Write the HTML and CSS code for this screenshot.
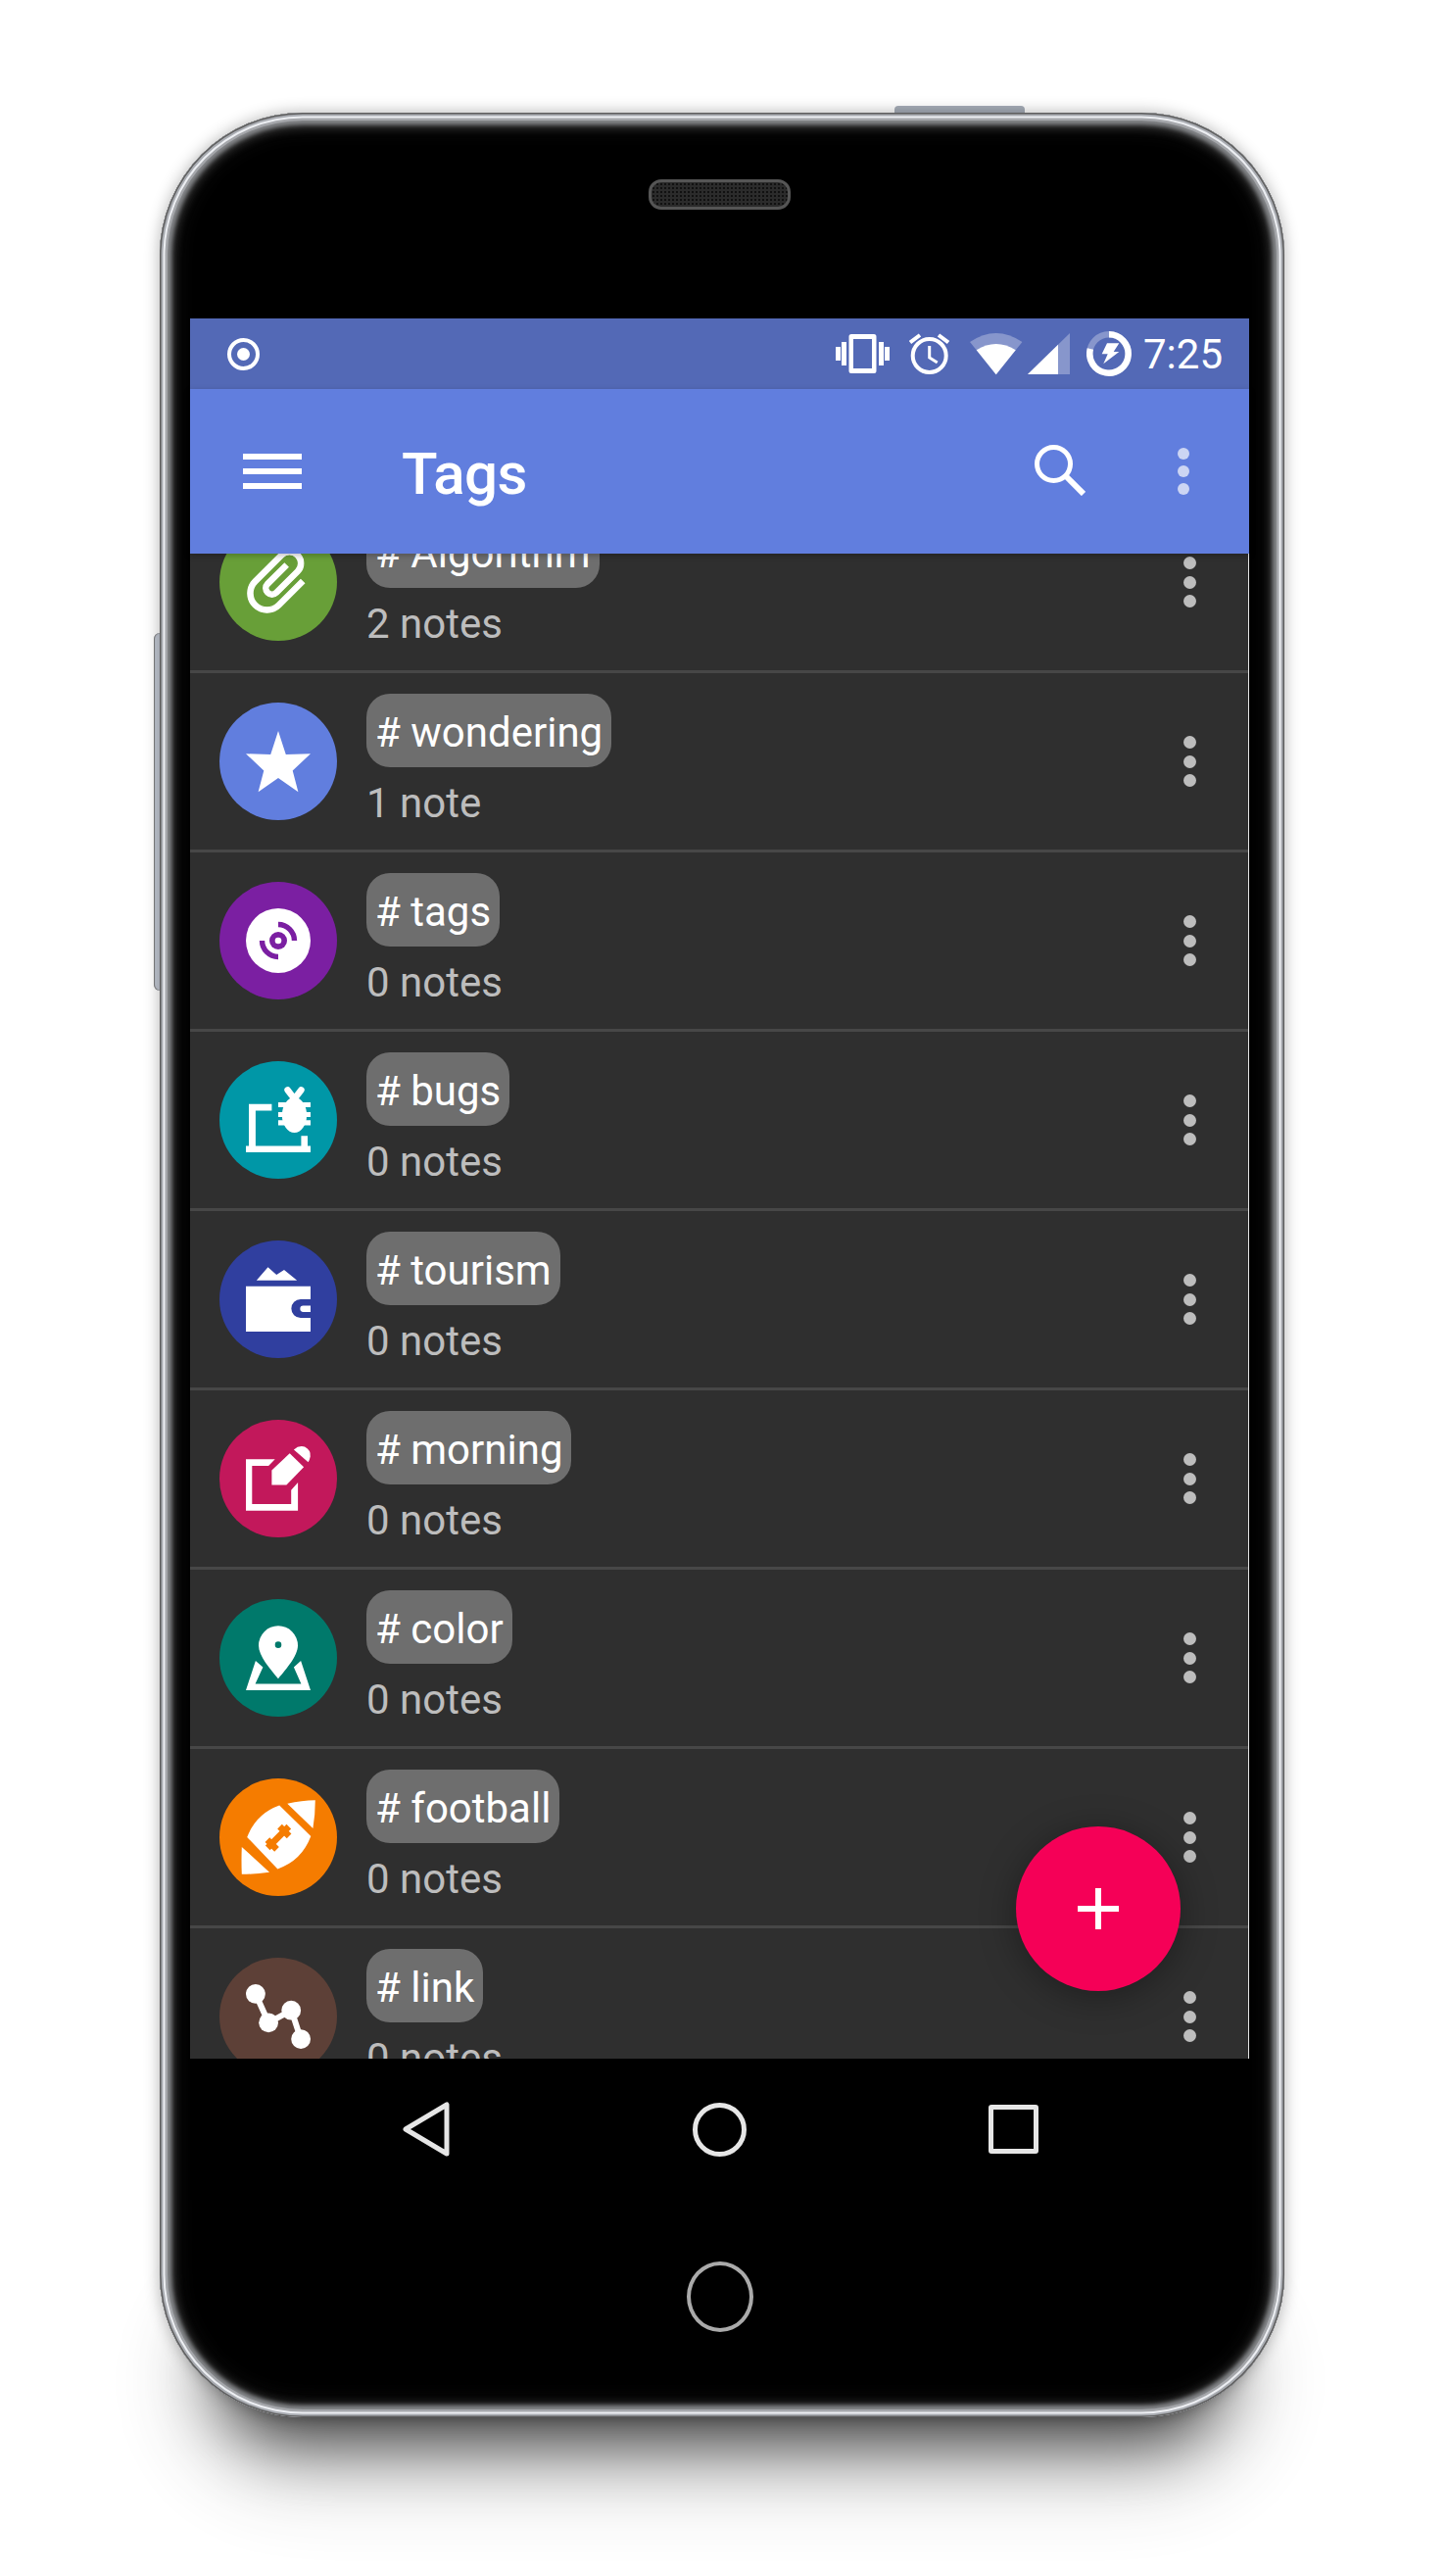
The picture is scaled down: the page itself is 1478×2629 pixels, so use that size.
FILE: index.html
```html
<!DOCTYPE html>
<html lang="en">
<head>
  <meta charset="UTF-8">
  <title>Tags</title>
  <link rel="stylesheet" href="styles.css">
</head>
<body>
  <div class="floor-shadow"></div>
  <div class="side-key"></div>
  <div class="top-key"></div>

  <div class="phone">
    <div class="earpiece"></div>

    <div class="screen">
      <div class="statusbar">
        <svg class="st-record" width="33" height="33" viewBox="0 0 33 33"><circle cx="16.5" cy="16.5" r="14.5" fill="none" stroke="#fff" stroke-width="4"/><circle cx="16.5" cy="16.5" r="6.5" fill="#fff"/></svg>
        <svg width="55" height="40" viewBox="0 0 55 40" fill="#fff"><path fill-rule="evenodd" d="M16 0h23a2.500 2.500 0 0 1 2.500 2.500v35a2.500 2.500 0 0 1-2.500 2.500h-23a2.500 2.500 0 0 1-2.500-2.500v-35a2.500 2.500 0 0 1 2.500-2.500zm2 5v30h19v-30z"/><rect x="44" y="8" width="5" height="24"/><rect x="50" y="13" width="5" height="14"/><rect x="6" y="8" width="5" height="24"/><rect x="0" y="13" width="5" height="14"/></svg>
        <svg class="st-alarm" width="41" height="43" viewBox="0 0 41 43"><circle cx="20.700" cy="23" r="17" fill="none" stroke="#fff" stroke-width="4"/><path d="M20.700 13v12l8 5" fill="none" stroke="#fff" stroke-width="3"/><path d="M1 9.500l10-7.500M40 9.500l-10-7.500" stroke="#fff" stroke-width="4"/></svg>
        <svg class="st-wifi" width="54" height="43" viewBox="0 0 54 43" fill="#fff"><path opacity=".3" d="M26.700 42.300L0 9Q26.700-9 53.400 9z"/><path d="M26.700 42.300L6.700 17.300Q26.700 4.700 46.700 17.300z"/></svg>
        <svg class="st-signal" width="43" height="42" viewBox="0 0 43 42" fill="#fff"><path opacity=".3" d="M0 42L43 0v42z"/><path d="M0 42L31 11.700V42z"/></svg>
        <svg class="st-battery" width="46" height="46" viewBox="0 0 46 46"><circle cx="23" cy="23" r="19.700" fill="none" stroke="#fff" stroke-width="6.500" opacity=".3"/><path d="M23 3.300A19.700 19.700 0 1 1 3.900 18" fill="none" stroke="#fff" stroke-width="6.500"/><path fill="#fff" d="M21 12.300h12.300L27.700 21h5.600L17.300 33.300l4.400-10h-6z"/></svg>
        <span class="time">7:25</span>
      </div>

      <div class="appbar">
        <div class="hamburger"><span></span><span></span><span></span></div>
        <div class="title">Tags</div>
        <svg class="search" width="52" height="52" viewBox="0 0 52 52"><circle cx="19.500" cy="19.500" r="17" fill="none" stroke="#fff" stroke-width="5"/><path d="M32 32l18 18" stroke="#fff" stroke-width="6"/></svg>
        <div class="dots dots-bar"><span></span><span></span><span></span></div>
      </div>

      <div class="list">
        <div class="rows">

          <div class="row">
            <div class="badge c-green">
              <svg class="over" width="72" height="72" viewBox="0 0 24 24"><path transform="translate(12 12) rotate(-45) scale(1.2) translate(-12 -12.500)" fill="#fff" stroke="#fff" stroke-width=".3" d="M7.500,18A5.500,5.500 0 0,1 2,12.500A5.500,5.500 0 0,1 7.500,7H18A4,4 0 0,1 22,11A4,4 0 0,1 18,15H9.500A2.500,2.500 0 0,1 7,12.500A2.500,2.500 0 0,1 9.500,10H17V11.500H9.500A1,1 0 0,0 8.500,12.500A1,1 0 0,0 9.500,13.500H18A2.500,2.500 0 0,0 20.500,11A2.500,2.500 0 0,0 18,8.500H7.500A4,4 0 0,0 3.500,12.500A4,4 0 0,0 7.500,16.500H17V18H7.500Z"/></svg>
            </div>
            <div class="info"><div class="tag"># Algorithm</div><div class="count">2 notes</div></div>
            <div class="dots"><span></span><span></span><span></span></div>
          </div>

          <div class="row">
            <div class="badge c-blue">
              <svg width="72" height="72" viewBox="0 0 24 24"><path fill="#fff" d="M12 17.700L18.800 22.400 16.900 15.200 23 9.400 14.600 9.700 12 1.700 9.400 9.700 1 9.400 7.100 15.200 5.200 22.400z"/></svg>
            </div>
            <div class="info"><div class="tag"># wondering</div><div class="count">1 note</div></div>
            <div class="dots"><span></span><span></span><span></span></div>
          </div>

          <div class="row">
            <div class="badge c-purple">
              <svg width="72" height="72" viewBox="0 0 24 24"><circle cx="12" cy="12" r="11" fill="#fff"/><circle cx="12" cy="12" r="3" fill="#7b1fa2"/><circle cx="12" cy="12" r="1.100" fill="#fff"/><path d="M12 6.500A5.500 5.500 0 0 1 17.500 12M12 17.500A5.500 5.500 0 0 1 6.500 12" fill="none" stroke="#7b1fa2" stroke-width="1.800"/></svg>
            </div>
            <div class="info"><div class="tag"># tags</div><div class="count">0 notes</div></div>
            <div class="dots"><span></span><span></span><span></span></div>
          </div>

          <div class="row">
            <div class="badge c-teal">
              <svg width="72" height="72" viewBox="0 0 24 24" fill="#fff"><path d="M1 20.800h1V6.600h7.800v2.200H4.300v12h15.500v-3.400H22v3.400h1V23H1z"/><ellipse cx="17.500" cy="10.300" rx="4.200" ry="6"/><path d="M12 6h11v1.700H12zM12 9.300h11V11H12zM12 12.100h11v1.700H12z"/><path d="M15.200 1.800l2.300 3 2.300-3" fill="none" stroke="#fff" stroke-width="2.200" stroke-linecap="round"/></svg>
            </div>
            <div class="info"><div class="tag"># bugs</div><div class="count">0 notes</div></div>
            <div class="dots"><span></span><span></span><span></span></div>
          </div>

          <div class="row">
            <div class="badge c-indigo">
              <svg width="72" height="72" viewBox="0 0 24 24" fill="#fff"><path d="M4.600 5.600L8.500 1.100l2.900 2.600L14 2l4.400 3.600z"/><path fill-rule="evenodd" d="M1 7.600h22V12h-3.400a3.150 3.150 0 0 0 0 6.300H23V23H1z"/><path d="M20.500 14.200H23v2.100h-2.500a1.050 1.050 0 0 1 0-2.100z"/></svg>
            </div>
            <div class="info"><div class="tag"># tourism</div><div class="count">0 notes</div></div>
            <div class="dots"><span></span><span></span><span></span></div>
          </div>

          <div class="row">
            <div class="badge c-pink">
              <svg width="72" height="72" viewBox="0 0 24 24" fill="#fff"><path d="M1 5.440h9.900L8.700 7.700H3.100v13h13.300v-4.800l2.300-2.600V22.900H1z"/><path d="M9.800 9.200l6.100-5.800 4.800 4.700-5.900 6.100h-5z"/><path d="M17.300 2.200Q19 .6 21 1.200q2.200 1.200 1.900 3.300-.2 1.100-.7 1.900z"/></svg>
            </div>
            <div class="info"><div class="tag"># morning</div><div class="count">0 notes</div></div>
            <div class="dots"><span></span><span></span><span></span></div>
          </div>

          <div class="row">
            <div class="badge c-green2">
              <svg width="72" height="72" viewBox="0 0 24 24" fill="#fff"><path fill-rule="evenodd" d="M12 1.100a6.670 6.670 0 0 1 6.670 6.670c0 3.600-4 8.100-6.670 11.300-2.700-3.200-6.670-7.700-6.670-11.300A6.670 6.670 0 0 1 12 1.100zm0 5.350a1.100 1.100 0 1 0 0 2.200 1.100 1.100 0 0 0 0-2.200z"/><path d="M4.300 13l2.500 2.200-2.600 5.600h15.600l-2.500-5.600 2.400-2.200L23 23H1z"/></svg>
            </div>
            <div class="info"><div class="tag"># color</div><div class="count">0 notes</div></div>
            <div class="dots"><span></span><span></span><span></span></div>
          </div>

          <div class="row">
            <div class="badge c-orange">
              <svg class="over" width="72" height="72" viewBox="0 0 24 24"><path fill="#fff" d="M15.100.6Q20 -.6 24.600-.6 24.600 4.500 23.800 9zM-.4 15.300L9 23.900Q4 24.600-.4 24.600-.6 20-.4 15.300zM12.400 1.200L23.100 11.700Q20 20 11.800 22.800L1.400 12Q4.500 4 12.400 1.200z"/><path d="M8.400 15.600l7.200-7.200M8.300 12.900l3.200 3.200M12.500 8.400l3.200 3.200" fill="none" stroke="#f57c00" stroke-width="2.200"/></svg>
            </div>
            <div class="info"><div class="tag"># football</div><div class="count">0 notes</div></div>
            <div class="dots"><span></span><span></span><span></span></div>
          </div>

          <div class="row">
            <div class="badge c-brown">
              <svg width="72" height="72" viewBox="0 0 24 24" fill="#fff"><path d="M4.300 4.300l4.400 9.800 7.800-4.200 3.200 9.800" fill="none" stroke="#fff" stroke-width="2"/><circle cx="4.300" cy="4.300" r="3.300"/><circle cx="8.700" cy="14.100" r="3.300"/><circle cx="16.400" cy="9.900" r="3.300"/><circle cx="19.700" cy="19.700" r="3.300"/></svg>
            </div>
            <div class="info"><div class="tag"># link</div><div class="count">0 notes</div></div>
            <div class="dots"><span></span><span></span><span></span></div>
          </div>

        </div>
        <div class="fab"><span class="plus-h"></span><span class="plus-v"></span></div>
      </div>

      <div class="navbar">
        <div class="nav-cell"><svg width="48" height="56" viewBox="0 0 48 56"><path d="M45 3v50L3 28z" fill="none" stroke="#e6e6e6" stroke-width="5" stroke-linejoin="round"/></svg></div>
        <div class="nav-cell"><div class="nav-circle"></div></div>
        <div class="nav-cell"><div class="nav-square"></div></div>
      </div>
    </div>

    <div class="home-key"></div>
  </div>
</body>
</html>
```

FILE: styles.css
```css
html, body {
  margin: 0;
  height: 2629px;
  overflow: hidden;
  background: #fff;
  font-family: Roboto, sans-serif;
}

/* phone body */
.phone {
  position: relative;
  box-sizing: border-box;
  width: 1148px;
  height: 2352px;
  margin: 115px 0 0 163px;
  padding: 68px 36px 0 31px;
  display: flex;
  flex-direction: column;
  align-items: center;
  background: #000;
  border-radius: 146px;
  box-shadow:
    inset 0 0 0 1.5px #5e5e5e,
    inset 0 0 0 3.500px #a9acb2,
    inset 0 0 0 5.500px #eceef2,
    inset 0 0 0 8px #a5a7ab,
    inset 0 0 4px 12px #85878a,
    inset 0 1px 10px 14px #3a3a3a,
    inset 0 0 20px 18px #101010,
    0 0 16px rgba(0, 0, 0, .3);
}

.floor-shadow {
  position: absolute;
  left: 225px;
  top: 2350px;
  width: 1020px;
  height: 140px;
  border-radius: 120px;
  background: #000;
  box-shadow: 0 10px 60px 30px rgba(0, 0, 0, .22);
  filter: blur(36px);
  opacity: .8;
}

.top-key {
  position: absolute;
  left: 913px;
  top: 108px;
  width: 133px;
  height: 10px;
  border-radius: 4px 4px 0 0;
  background: #a6adb8;
}

.side-key {
  position: absolute;
  left: 157px;
  top: 646px;
  width: 10px;
  height: 365px;
  border-radius: 6px 0 0 6px;
  background: #c3c9d4;
  box-shadow: inset 1px 0 1px #777;
}

.earpiece {
  width: 145px;
  height: 31px;
  box-sizing: border-box;
  border: 3px solid #555;
  border-radius: 13px;
  background: #2b2b2b radial-gradient(circle, #111 1px, transparent 1.500px) 0 0 / 4px 4px;
  flex: none;
}

.screen {
  width: 1081px;
  height: 1920px;
  margin-top: 111px;
  display: flex;
  flex-direction: column;
  flex: none;
  position: relative;
}

/* status bar */
.statusbar {
  height: 72px;
  flex: none;
  background: #5369b6;
  display: flex;
  align-items: center;
  padding: 0 27px 0 38px;
  color: #fff;
}

.st-record { margin-right: auto; }
.st-alarm { margin-left: 19.500px; }
.st-wifi { margin-left: 21px; }
.st-signal { margin-left: 5px; }
.st-battery { margin-left: 17px; }

.time {
  margin-left: 12.500px;
  font-size: 42px;
  line-height: 49px;
}

/* app bar */
.appbar {
  position: relative;
  z-index: 2;
  height: 168px;
  flex: none;
  background: #617ede;
  display: flex;
  align-items: center;
  padding: 0 0 0 54px;
  color: #fff;
  box-shadow: 0 2px 6px rgba(0, 0, 0, .25);
}

.hamburger {
  width: 60px;
  display: flex;
  flex-direction: column;
  gap: 9px;
}

.hamburger span {
  display: block;
  height: 6px;
  background: #fff;
}

.title {
  margin-left: 102px;
  padding-top: 5px;
  font-size: 60px;
  font-weight: 500;
  letter-spacing: -.5px;
}

.search {
  margin-left: auto;
  margin-top: -2px;
}

.dots {
  flex: none;
  display: flex;
  flex-direction: column;
  gap: 6.500px;
  margin-right: 53px;
}

.dots span {
  display: block;
  width: 13px;
  height: 13px;
  border-radius: 50%;
  background: #bdbdbd;
}

.dots-bar {
  margin-left: 94px;
  margin-right: 61px;
  gap: 6px;
}

.dots-bar span {
  width: 12px;
  height: 12px;
  background: #ccd5f3;
}

/* list */
.list {
  position: relative;
  flex: 1;
  min-height: 0;
  overflow: hidden;
  background: #2f2f2f;
  border-right: 1px solid #e6e6e6;
}

.rows {
  margin-top: -61px;
}

.row {
  box-sizing: border-box;
  height: 183px;
  display: flex;
  align-items: center;
  padding-left: 30px;
  border-bottom: 3px solid #474747;
}

.badge {
  width: 120px;
  height: 120px;
  flex: none;
  border-radius: 50%;
  display: flex;
  align-items: center;
  justify-content: center;
}

.over { overflow: visible; }

.c-green { background: #689f38; }
.c-blue { background: #617ede; }
.c-purple { background: #7b1fa2; }
.c-teal { background: #0097a7; }
.c-indigo { background: #303f9f; }
.c-pink { background: #c2185b; }
.c-green2 { background: #00796b; }
.c-orange { background: #f57c00; }
.c-brown { background: #5d4037; }

.info {
  flex: 1;
  margin-left: 30px;
  align-self: flex-start;
  padding-top: 21px;
}

.tag {
  width: fit-content;
  padding: 15px 9px 11px;
  border-radius: 24px;
  background: #6e6e6e;
  color: #fff;
  font-size: 42px;
  line-height: 49px;
}

.count {
  margin-top: 12px;
  color: #bdbdbd;
  font-size: 42px;
  line-height: 49px;
}

/* add button */
.fab {
  position: absolute;
  left: 843px;
  top: 1299px;
  width: 168px;
  height: 168px;
  border-radius: 50%;
  background: #f50057;
  box-shadow: 0 6px 36px rgba(0, 0, 0, .35);
}

.plus-h, .plus-v {
  position: absolute;
  background: #fff;
}

.plus-h { left: 63px; top: 81px; width: 42px; height: 6px; }
.plus-v { left: 81px; top: 63px; width: 6px; height: 42px; }

/* nav bar */
.navbar {
  height: 144px;
  flex: none;
  background: #000;
  display: flex;
  justify-content: center;
  align-items: center;
}

.nav-cell {
  width: 300px;
  display: flex;
  justify-content: center;
  align-items: center;
}

.nav-circle {
  box-sizing: border-box;
  width: 55px;
  height: 55px;
  border: 5.500px solid #e6e6e6;
  border-radius: 50%;
}

.nav-square {
  box-sizing: border-box;
  width: 51px;
  height: 50px;
  border: 5px solid #e6e6e6;
  border-radius: 3px;
}

.home-key {
  box-sizing: border-box;
  width: 68px;
  height: 72px;
  margin-top: 63px;
  flex: none;
  border: 4px solid #aaa;
  border-radius: 50%;
}
```
